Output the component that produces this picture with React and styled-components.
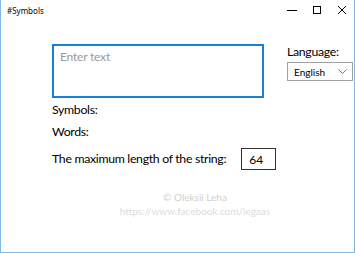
import React from 'react'
import styled, { createGlobalStyle } from 'styled-components'

const Global = createGlobalStyle`
body {
  margin: 0;
  background: #fff;
  font-family: Lato, "Noto Sans", sans-serif;
}
`

const Window = styled.div`
width: 355px;
height: 253px;
box-sizing: border-box;
border: 1px solid #7eb9e9;
border-top: none;
display: flex;
flex-direction: column;
background: #fff;
color: #000;
overflow: hidden;
`

const TitleBar = styled.div`
height: 20px;
display: flex;
align-items: center;
padding-left: 6px;
`

const Caption = styled.div`
flex: 1;
font-size: 8px;
font-family: "Noto Sans", sans-serif;
color: #000;
`

const Controls = styled.div`
display: flex;
height: 100%;
`

const ControlButton = styled.div`
width: 25px;
display: flex;
align-items: center;
justify-content: center;
`

const Body = styled.div`
flex: 1;
display: flex;
flex-direction: column;
padding: 24px 0 0 51px;
`

const TopRow = styled.div`
display: flex;
align-items: flex-start;
`

const TextArea = styled.div`
width: 212px;
height: 54px;
box-sizing: border-box;
border: 2px solid #1a7fd7;
padding: 3px 6px;
font-size: 12px;
letter-spacing: -0.2px;
color: #999;
`

const LangColumn = styled.div`
margin-left: 23px;
display: flex;
flex-direction: column;
`

const Label = styled.div`
font-size: 12.3px;
letter-spacing: -0.32px;
line-height: 16px;
color: #000;
margin-top: ${p => p.$mt || 0}px;
`

const Select = styled.div`
margin-top: 2px;
width: 66px;
height: 19px;
box-sizing: border-box;
border: 1px solid #a0a0a0;
display: flex;
align-items: center;
justify-content: space-between;
padding: 0 5px 0 6px;
font-size: 10px;
`

const MaxRow = styled.div`
display: flex;
align-items: center;
margin-top: 8px;
`

const NumberBox = styled.div`
margin-left: 15px;
width: 35px;
height: 22px;
box-sizing: border-box;
border: 1px solid #333;
display: flex;
align-items: center;
padding-left: 7px;
font-size: 12px;
`

const Footer = styled.div`
margin-top: 20px;
margin-left: -16px;
display: flex;
flex-direction: column;
align-items: center;
font-size: 10px;
line-height: 14px;
`

const FooterLine = styled.div`
color: ${p => p.$color};
`

const App = () => {
  return (
    <Window>
      <Global />
      <TitleBar>
        <Caption>#Symbols</Caption>
        <Controls>
          <ControlButton>
            <svg width="10" height="10" viewBox="0 0 10 10"><path d="M0 5.5h10" stroke="#000" strokeWidth="1" /></svg>
          </ControlButton>
          <ControlButton>
            <svg width="10" height="10" viewBox="0 0 10 10"><rect x="1.5" y="1.5" width="7" height="7" fill="none" stroke="#000" strokeWidth="1" /></svg>
          </ControlButton>
          <ControlButton>
            <svg width="10" height="10" viewBox="0 0 10 10"><path d="M1 1l8 8M9 1l-8 8" stroke="#000" strokeWidth="1" /></svg>
          </ControlButton>
        </Controls>
      </TitleBar>
      <Body>
        <TopRow>
          <TextArea>Enter text</TextArea>
          <LangColumn>
            <Label>Language:</Label>
            <Select>
              <span>English</span>
              <svg width="9" height="6" viewBox="0 0 9 6"><path d="M0.5 0.5l4 4 4-4" fill="none" stroke="#777" strokeWidth="1" /></svg>
            </Select>
          </LangColumn>
        </TopRow>
        <Label $mt={4}>Symbols:</Label>
        <Label $mt={6}>Words:</Label>
        <MaxRow>
          <Label>The maximum length of the string:</Label>
          <NumberBox>64</NumberBox>
        </MaxRow>
        <Footer>
          <FooterLine $color="#cfcfcf">© Oleksii Leha</FooterLine>
          <FooterLine $color="#dcdcdc">https://www.facebook.com/legaas</FooterLine>
        </Footer>
      </Body>
    </Window>
  )
}

export default App
